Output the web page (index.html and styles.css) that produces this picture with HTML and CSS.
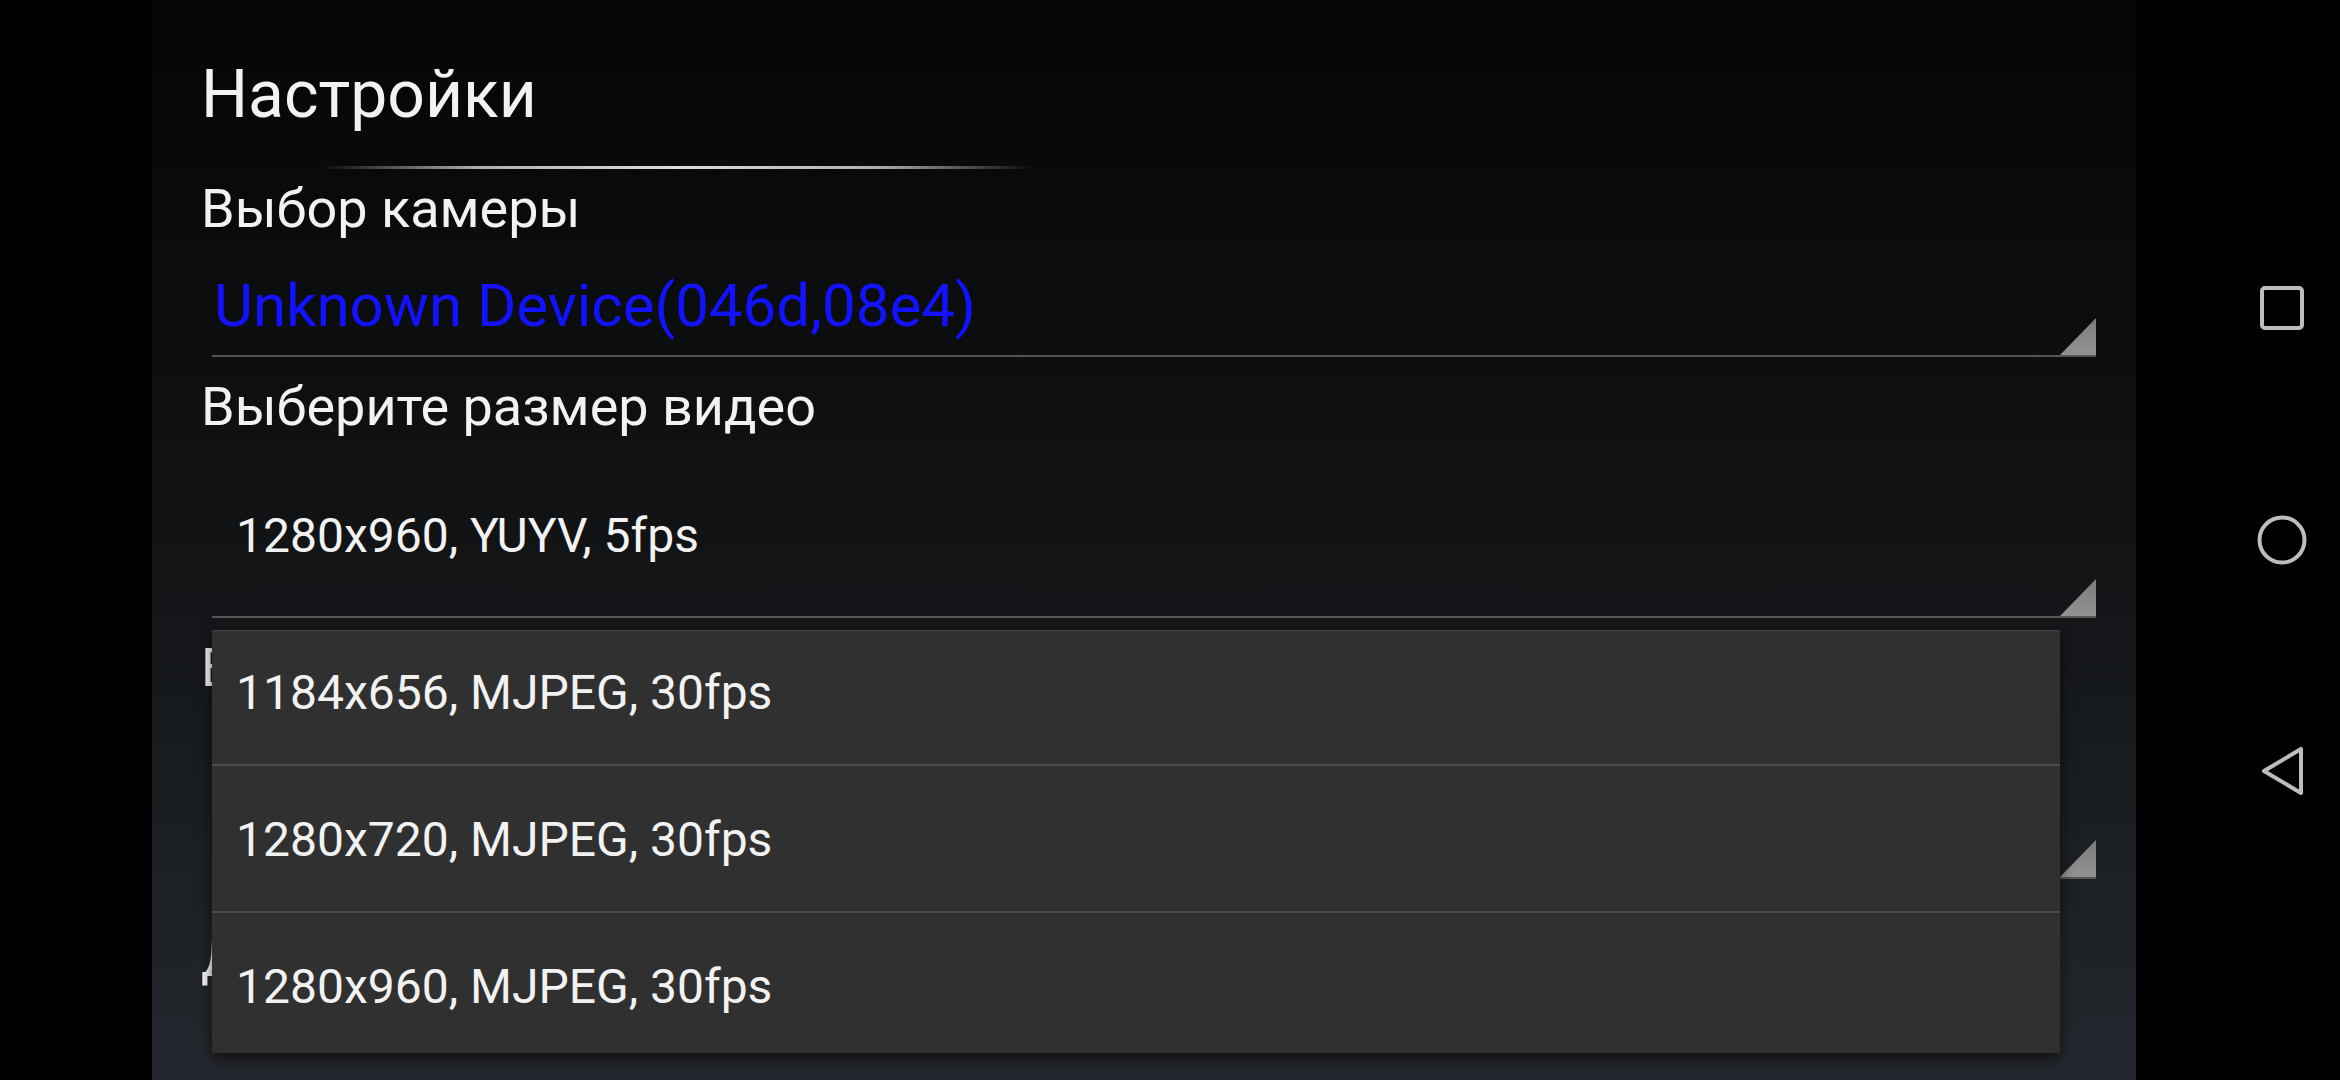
FILE: index.html
```html
<!DOCTYPE html>
<html>
<head>
  <meta charset="UTF-8">
  <title>Настройки</title>
  <link rel="stylesheet" href="styles.css">
</head>
<body>
  <div class="screen">
    <div class="side-gap"></div>

    <!-- Settings dialog -->
    <div class="dialog">
      <h1 class="dialog-title">Настройки</h1>
      <div class="title-divider"></div>

      <div class="pref-label">Выбор камеры</div>
      <div class="spinner spinner-camera">
        <span class="spinner-text">Unknown Device(046d,08e4)</span>
        <span class="spinner-arrow"></span>
      </div>

      <div class="pref-label">Выберите размер видео</div>
      <div class="spinner spinner-large">
        <span class="spinner-text">1280x960, YUYV, 5fps</span>
        <span class="spinner-arrow"></span>
      </div>

      <div class="pref-label">Выберите формат изображения</div>
      <div class="spinner spinner-large">
        <span class="spinner-text">Авто</span>
        <span class="spinner-arrow"></span>
      </div>

      <div class="pref-label pref-label-last">Дополнительно</div>

      <!-- Open dropdown of the video size spinner -->
      <div class="dropdown">
        <div class="dropdown-list">
          <div class="dropdown-item">1184x656, MJPEG, 30fps</div>
          <div class="dropdown-item">1280x720, MJPEG, 30fps</div>
          <div class="dropdown-item">1280x960, MJPEG, 30fps</div>
        </div>
      </div>
    </div>

    <!-- System navigation bar -->
    <div class="nav-bar">
      <svg class="nav-icon" viewBox="0 0 60 60">
        <rect x="10" y="9" width="40" height="40" rx="3" ry="3"></rect>
      </svg>
      <svg class="nav-icon" viewBox="0 0 60 60">
        <circle cx="30" cy="30" r="22.5"></circle>
      </svg>
      <svg class="nav-icon" viewBox="0 0 60 60">
        <polygon points="12,30 49,8 49,52"></polygon>
      </svg>
    </div>
  </div>
</body>
</html>
```

FILE: styles.css
```css
/* Global styles */
* {
  margin: 0;
  padding: 0;
  box-sizing: border-box;
}

:root {
  --text-color: #f2f2f2;
  --line-color: #565656;
  --arrow-color: #8c8c8c;
  --popup-bg: #303030;
  --popup-divider: #4b4b4b;
  --nav-icon: #bdbdbd;
}

html, body {
  width: 2340px;
  height: 1080px;
  overflow: hidden;
  background-color: #000;
  font-family: Roboto, "Noto Sans", sans-serif;
  color: var(--text-color);
}

.screen {
  display: flex;
  height: 1080px;
}

.side-gap {
  width: 152px;
  flex-shrink: 0;
}

/* Dialog */
.dialog {
  position: relative;
  width: 1984px;
  height: 1080px;
  flex-shrink: 0;
  padding: 0 40px 0 49px;
  overflow: hidden;
  background: linear-gradient(to bottom, #050505 0%, #0b0c0d 25%, #111315 50%, #1a1d21 75%, #24272d 100%);
}

.dialog-title {
  padding-top: 55px;
  font-size: 66px;
  line-height: 80px;
  font-weight: 400;
}

.title-divider {
  width: 712px;
  height: 3px;
  margin: 31px 0 0 120px;
  background: linear-gradient(to right, rgba(200, 200, 200, 0) 0%, rgba(205, 205, 205, 0.85) 22%, #dcdcdc 50%, rgba(205, 205, 205, 0.85) 78%, rgba(200, 200, 200, 0) 100%);
}

.pref-label {
  margin-top: 19px;
  font-size: 54px;
  line-height: 62px;
}

.title-divider + .pref-label {
  margin-top: 9px;
}

.pref-label-last {
  margin-top: 48px;
}

/* Spinner styles */
.spinner {
  display: flex;
  justify-content: space-between;
  margin-left: 11px;
  border-bottom: 2px solid var(--line-color);
}

.spinner-text {
  white-space: nowrap;
}

.spinner-camera .spinner-text {
  padding: 31px 0 14px 2px;
  font-size: 60px;
  line-height: 70px;
  color: #1212ff;
}

.spinner-large .spinner-text {
  padding: 70px 0 52px 24px;
  font-size: 48px;
  line-height: 56px;
}

.spinner-arrow {
  align-self: flex-end;
  width: 36px;
  height: 37px;
  background: linear-gradient(to bottom, #7c7c7c, #929292);
  clip-path: polygon(100% 0, 100% 100%, 0 100%);
}

/* Dropdown popup */
.dropdown {
  position: absolute;
  top: 630px;
  left: 60px;
  width: 1848px;
  height: 423px;
  overflow: hidden;
  background-color: var(--popup-bg);
  border-radius: 2px;
  box-shadow: inset 0 1px 0 rgba(255, 255, 255, 0.1), 0 6px 14px rgba(0, 0, 0, 0.55);
}

.dropdown-list {
  margin-top: -11px;
}

.dropdown-item {
  display: flex;
  align-items: center;
  height: 147px;
  padding: 2px 0 0 24px;
  border-bottom: 2px solid var(--popup-divider);
  font-size: 48px;
  line-height: 56px;
  white-space: nowrap;
}

/* Navigation bar */
.nav-bar {
  display: flex;
  flex-direction: column;
  justify-content: center;
  align-items: center;
  gap: 171px;
  width: 116px;
  margin-left: auto;
}

.nav-icon {
  width: 60px;
  height: 60px;
  fill: none;
  stroke: var(--nav-icon);
  stroke-width: 4;
  stroke-linejoin: round;
}
```
